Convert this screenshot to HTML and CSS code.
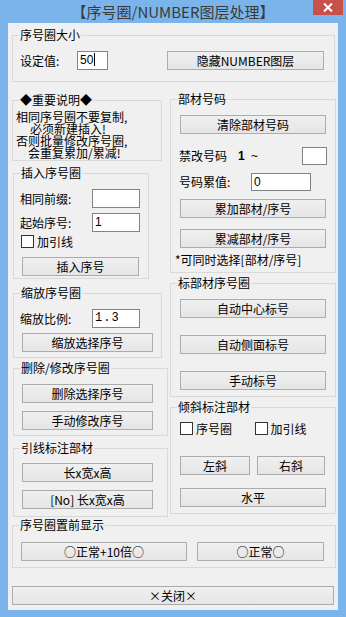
FILE: index.html
```html
<!DOCTYPE html>
<html lang="zh-CN">
<head>
    <meta charset="UTF-8">
    <meta name="viewport" content="width=device-width, initial-scale=1.0">
    <title>序号圈/NUMBER图层处理</title>
    <link rel="stylesheet" href="styles.css">
</head>
<body>
    <div class="window">
        <div class="titlebar">
            <span class="title">【序号圈/NUMBER图层处理】</span>
            <span class="close-x">
                <svg width="10" height="9" viewBox="0 0 10 9"><path d="M1 0.5 L9 8.5 M9 0.5 L1 8.5" stroke="#fff" stroke-width="2"/></svg>
            </span>
        </div>

        <div class="client">
            <fieldset class="group size-group">
                <legend>序号圈大小</legend>
                <div class="row size-row">
                    <span class="size-label">设定值:</span>
                    <div class="textbox size-box">50<span class="caret"></span></div>
                    <button class="btn hide-btn">隐藏NUMBER图层</button>
                </div>
            </fieldset>

            <div class="columns">
                <div class="col-left">
                    <fieldset class="group notes-group">
                        <legend>◆重要说明◆</legend>
                        <div class="notes">
                            <div>相同序号圈不要复制,</div>
                            <div class="indent-a">必须新建插入!</div>
                            <div>否则批量修改序号圈,</div>
                            <div class="indent-b">会重复累加/累减!</div>
                        </div>
                    </fieldset>

                    <fieldset class="group insert-group">
                        <legend>插入序号圈</legend>
                        <div class="row field-row first">
                            <span class="field-label">相同前缀:</span>
                            <div class="textbox num-box"></div>
                        </div>
                        <div class="row field-row second">
                            <span class="field-label">起始序号:</span>
                            <div class="textbox num-box">1</div>
                        </div>
                        <div class="row check-row">
                            <span class="checkbox"></span>
                            <span class="check-text">加引线</span>
                        </div>
                        <button class="btn insert-btn">插入序号</button>
                    </fieldset>

                    <fieldset class="group scale-group">
                        <legend>缩放序号圈</legend>
                        <div class="row field-row first">
                            <span class="field-label">缩放比例:</span>
                            <div class="textbox num-box mono">1.3</div>
                        </div>
                        <button class="btn wide-left scale-btn">缩放选择序号</button>
                    </fieldset>

                    <fieldset class="group edit-group">
                        <legend>删除/修改序号圈</legend>
                        <button class="btn wide-left first-btn">删除选择序号</button>
                        <button class="btn wide-left next-btn">手动修改序号</button>
                    </fieldset>

                    <fieldset class="group lead-group">
                        <legend>引线标注部材</legend>
                        <button class="btn wide-left lead-first">长x宽x高</button>
                        <button class="btn wide-left next-btn">[No] 长x宽x高</button>
                    </fieldset>
                </div>

                <div class="col-right">
                    <fieldset class="group part-group">
                        <legend>部材号码</legend>
                        <button class="btn wide-right first-btn">清除部材号码</button>
                        <div class="row lock-row">
                            <span class="lock-label">禁改号码</span>
                            <span class="lock-one">1</span>
                            <span class="lock-tilde">~</span>
                            <div class="textbox lock-box"></div>
                        </div>
                        <div class="row step-row">
                            <span class="step-label">号码累值:</span>
                            <div class="textbox step-box">0</div>
                        </div>
                        <button class="btn wide-right add-btn">累加部材/序号</button>
                        <button class="btn wide-right sub-btn">累减部材/序号</button>
                        <div class="part-note">*可同时选择[部材/序号]</div>
                    </fieldset>

                    <fieldset class="group mark-group">
                        <legend>标部材序号圈</legend>
                        <button class="btn wide-right first-btn">自动中心标号</button>
                        <button class="btn wide-right spaced-btn">自动侧面标号</button>
                        <button class="btn wide-right spaced-btn">手动标号</button>
                    </fieldset>

                    <fieldset class="group slant-group">
                        <legend>倾斜标注部材</legend>
                        <div class="row slant-checks">
                            <span class="check-item">
                                <span class="checkbox"></span>
                                <span class="check-text">序号圈</span>
                            </span>
                            <span class="check-item">
                                <span class="checkbox"></span>
                                <span class="check-text">加引线</span>
                            </span>
                        </div>
                        <div class="row slant-btns">
                            <button class="btn left-btn">左斜</button>
                            <button class="btn right-btn">右斜</button>
                        </div>
                        <button class="btn wide-right flat-btn">水平</button>
                    </fieldset>
                </div>
            </div>

            <fieldset class="group front-group">
                <legend>序号圈置前显示</legend>
                <div class="row front-row">
                    <button class="btn front-big">○正常+10倍○</button>
                    <button class="btn front-small">○正常○</button>
                </div>
            </fieldset>

            <button class="btn close-btn">×关闭×</button>
        </div>
    </div>
</body>
</html>
```

FILE: styles.css
```css
body {
    margin: 0;
    font-family: "Noto Sans CJK SC", "Liberation Sans", sans-serif;
    font-size: 12px;
    color: #000;
}

.window {
    width: 346px;
    height: 617px;
    background: #7ab4ea;
    display: flex;
    flex-direction: column;
}

/* title bar */
.titlebar {
    height: 23px;
    position: relative;
    text-align: center;
}

.title {
    font-size: 15px;
    line-height: 24px;
    color: #3a3a3a;
}

.close-x {
    position: absolute;
    top: 0;
    right: 3px;
    width: 30px;
    height: 15px;
    background: #c9514c;
    display: flex;
    align-items: center;
    justify-content: center;
}

.client {
    flex: 1;
    margin: 0 8px 7px;
    padding-top: 4px;
    background: #f0f0f0;
}

/* group boxes */
.group {
    margin: 0;
    padding: 0 6px;
    border: 1px solid #d9d9d9;
    box-sizing: border-box;
    min-width: 0;
}

.group legend {
    padding: 0 1px;
    line-height: 16px;
}

.row {
    display: flex;
    align-items: center;
}

/* buttons and boxes */
.btn {
    display: block;
    box-sizing: border-box;
    height: 19px;
    margin: 0;
    padding: 0;
    border: 1px solid #acacac;
    background: linear-gradient(#f0f0f0, #e5e5e5);
    font: inherit;
    line-height: 17px;
    color: #000;
}

.textbox {
    box-sizing: border-box;
    height: 19px;
    border: 1px solid #838383;
    background: #fff;
    padding-left: 2px;
    line-height: 17px;
    font-family: "Liberation Sans", sans-serif;
}

.mono {
    font-family: "Liberation Mono", monospace;
    letter-spacing: 1px;
}

.caret {
    display: inline-block;
    width: 1px;
    height: 13px;
    background: #000;
    vertical-align: -2px;
    margin-left: 1px;
}

.checkbox {
    box-sizing: border-box;
    width: 13px;
    height: 13px;
    border: 1px solid #333;
    background: #fff;
}

.check-text {
    margin-left: 3px;
}

/* size group */
.size-group {
    margin-left: 4px;
    width: 323px;
    height: 55px;
}

.size-row {
    margin-top: 8px;
}

.size-label {
    width: 57px;
    padding-left: 1px;
}

.size-box {
    width: 31px;
}

.hide-btn {
    margin-left: 59px;
    width: 157px;
}

.columns {
    display: flex;
    margin-top: 10px;
}

.col-left {
    margin-left: 4px;
    width: 158px;
}

.col-right {
    margin-top: -1px;
    width: 166px;
}

/* left column */
.notes-group {
    width: 150px;
    height: 69px;
}

.notes {
    margin: 3px 0 0 -3px;
    line-height: 12px;
    white-space: nowrap;
}

.indent-a {
    padding-left: 14px;
}

.indent-b {
    padding-left: 12px;
}

.insert-group {
    margin: 4px 0 0 1px;
    width: 136px;
    height: 114px;
}

.field-row.first {
    margin-top: 8px;
}

.field-row.second {
    margin-top: 5px;
}

.field-label {
    width: 72px;
}

.num-box {
    width: 48px;
}

.check-row {
    margin: 2px 0 0 1px;
    height: 14px;
}

.insert-btn {
    margin: 9px 0 0 2px;
    width: 117px;
}

.scale-group {
    margin: 6px 0 0 1px;
    width: 149px;
    height: 73px;
}

.wide-left {
    margin-left: 2px;
    width: 131px;
}

.scale-btn {
    margin-top: 5px;
}

.edit-group {
    margin: 2px 0 0 1px;
    width: 155px;
    height: 76px;
}

.first-btn {
    margin-top: 8px;
}

.next-btn {
    margin-top: 8px;
}

.lead-group {
    margin: 4px 0 0 1px;
    width: 155px;
    height: 77px;
}

.lead-first {
    margin-top: 7px;
}

/* right column */
.part-group {
    width: 166px;
    height: 182px;
}

.wide-right {
    margin-left: 3px;
    width: 146px;
}

.lock-row {
    margin-top: 12px;
    height: 19px;
}

.lock-label {
    margin-left: 2px;
    width: 59px;
}

.lock-one {
    font-family: "Liberation Sans", sans-serif;
    font-weight: bold;
    width: 13px;
}

.lock-tilde {
    font-family: "Liberation Sans", sans-serif;
}

.lock-box {
    margin-left: auto;
    margin-right: 2px;
    width: 25px;
    height: 18px;
}

.step-row {
    margin-top: 7px;
    height: 19px;
}

.step-label {
    margin-left: 2px;
    width: 72px;
}

.step-box {
    width: 60px;
    height: 18px;
}

.add-btn {
    margin-top: 8px;
}

.sub-btn {
    margin-top: 11px;
}

.part-note {
    margin: 6px 0 0 -2px;
    line-height: 12px;
    white-space: nowrap;
}

.mark-group {
    margin-top: 2px;
    width: 166px;
    height: 122px;
}

.spaced-btn {
    margin-top: 17px;
}

.slant-group {
    margin-top: 2px;
    width: 166px;
    height: 115px;
}

.slant-checks {
    margin: 6px 0 0 3px;
    height: 14px;
}

.check-item {
    display: flex;
    align-items: center;
    width: 84px;
}

.slant-btns {
    margin-top: 21px;
}

.left-btn {
    margin-left: 3px;
    width: 70px;
}

.right-btn {
    margin-left: 7px;
    width: 68px;
}

.flat-btn {
    margin-top: 13px;
}

/* bottom */
.front-group {
    margin-left: 4px;
    width: 324px;
    height: 51px;
}

.front-row {
    margin-top: 9px;
}

.front-big {
    margin-left: 2px;
    width: 166px;
}

.front-small {
    margin-left: 10px;
    width: 127px;
}

.close-btn {
    margin: 18px 0 0 4px;
    width: 322px;
}
```
